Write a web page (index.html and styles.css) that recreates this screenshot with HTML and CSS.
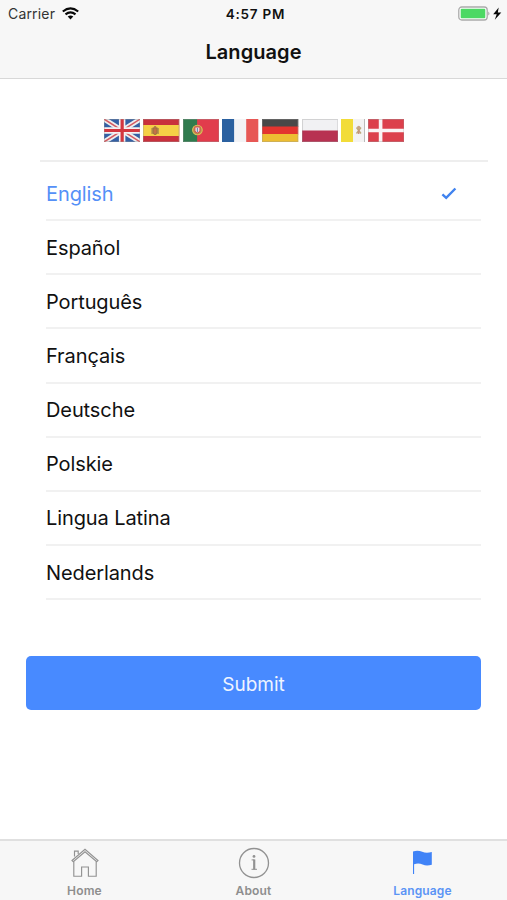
FILE: index.html
```html
<!DOCTYPE html>
<html lang="en">
<head>
<meta charset="utf-8">
<meta name="viewport" content="width=device-width, initial-scale=1">
<title>Language</title>
<link rel="stylesheet" href="styles.css">
</head>
<body>
<header class="header">
  <div class="status">
    <div class="status-left"><span class="carrier">Carrier</span>
      <svg width="17" height="13" viewBox="0 0 17 13" fill="none" stroke="#080808" stroke-width="2.1"><path d="M.8 4.5Q8.5-1.8 16.2 4.5M3.5 7.4Q8.5 3.2 13.5 7.4"/><path d="M5.7 9.6Q8.5 7.4 11.3 9.6L8.5 12.6Z" fill="#080808" stroke="none"/></svg>
    </div>
    <span class="time">4:57 PM</span>
    <div class="status-right">
      <svg width="44" height="16" viewBox="0 0 44 16"><rect x=".8" y="1" width="28.4" height="13" rx="3" fill="#fff" stroke="#aaa" stroke-width="1.3"/><rect x="2.7" y="2.8" width="24.6" height="9.4" rx="1" fill="#4cd964"/><path d="M30.4 5.4q2 2.1 0 4.2z" fill="#999"/><path d="M40.7 1.4L35.2 8.3H38.7L36.8 13.8 43.3 6.6H39.8Z" fill="#080808"/></svg>
    </div>
  </div>
  <h1 class="title">Language</h1>
</header>
<main class="content">
  <div class="flags">
    <svg class="flag" viewBox="0 0 36 23" preserveAspectRatio="none"><path fill="#3460a4" d="M0 0h36v23H0z"/><path d="M0 0L36 23M36 0L0 23" stroke="#eee" stroke-width="5"/><path d="M0 0L36 23M36 0L0 23" stroke="#d55a61" stroke-width="1.5"/><path d="M18 0V23M0 11.5H36" stroke="#f4f1f2" stroke-width="6.4"/><path d="M18 0V23M0 11.5H36" stroke="#d3363f" stroke-width="3.2"/><path class="rim" d="M.5.5h35v22H.5z"/></svg>
    <svg class="flag" viewBox="0 0 36 23" preserveAspectRatio="none"><path fill="#c9303c" d="M0 0h36v23H0z"/><path fill="#f5cf46" d="M0 6h36v11H0z"/><path d="M9 9v6M15 9v6" stroke="#a9864c" stroke-width="1.3"/><path d="M10 9h4v5q-2 3-4 0z" fill="#c37046" stroke="#96713f"/><circle cx="12" cy="8.3" r="1.3" fill="#ad7847"/><path class="rim" d="M.5.5h35v22H.5z"/></svg>
    <svg class="flag" viewBox="0 0 36 23" preserveAspectRatio="none"><path fill="#e13c4c" d="M0 0h36v23H0z"/><path fill="#2f7b4e" d="M0 0h14v23H0z"/><circle cx="14.3" cy="11" r="4.8" fill="#b5964c" stroke="#dfbe58"/><path d="M11.8 8h5v4q-2.5 4-5 0z" fill="#ecdfdf" stroke="#d44d50"/><path d="M14.3 9v4" stroke="#6680ac"/><path class="rim" d="M.5.5h35v22H.5z"/></svg>
    <svg class="flag flag-france" viewBox="0 0 36 23" preserveAspectRatio="none"><path fill="#f3f3f5" d="M0 0h36v23H0z"/><path fill="#2b61a0" d="M0 0h12v23H0z"/><path fill="#e75855" d="M24 0h12v23H24z"/></svg>
    <svg class="flag" viewBox="0 0 36 23" preserveAspectRatio="none"><path fill="#484848" d="M0 0h36v8H0z"/><path fill="#e3342f" d="M0 7.5h36v8H0z"/><path fill="#edbd32" d="M0 15h36v8H0z"/><path class="rim" d="M.5.5h35v22H.5z"/></svg>
    <svg class="flag" viewBox="0 0 36 23" preserveAspectRatio="none"><path fill="#f1f1f3" d="M0 0h36v12H0z"/><path fill="#b83252" d="M0 11.5h36V23H0z"/><path class="rim" d="M.5.5h35v22H.5z"/></svg>
    <svg class="flag flag-vatican" viewBox="0 0 24 23" preserveAspectRatio="none"><path fill="#f3f3f3" d="M0 0h24v23H0z"/><path fill="#f2dc38" d="M0 0h12v23H0z"/><path d="M15.5 8.5l4.5 6M20 8.5l-4.5 6" stroke="#bda879" stroke-width="1.4"/><circle cx="17.7" cy="8.5" r="1.7" fill="#c7a58a"/><path d="M17.7 11v4" stroke="#c6927d" stroke-width="1.5"/><path d="M23.5 0V23" stroke="#bbb"/></svg>
    <svg class="flag" viewBox="0 0 36 23" preserveAspectRatio="none"><path fill="#dc404c" d="M0 0h36v23H0z"/><path d="M12.5 0V23M0 11.5H36" stroke="#faf3f4" stroke-width="3.6"/><path class="rim" d="M.5.5h35v22H.5z"/></svg>
  </div>
  <ul class="list">
    <li class="row selected"><span>English</span><svg width="16" height="13" viewBox="0 0 16 13" fill="none" stroke="#4083ef" stroke-width="2.4"><path d="M1.4 7.3L5.2 10.8 14.4 1.5"/></svg></li>
    <li class="row"><span>Español</span></li>
    <li class="row"><span>Português</span></li>
    <li class="row"><span>Français</span></li>
    <li class="row"><span>Deutsche</span></li>
    <li class="row"><span>Polskie</span></li>
    <li class="row"><span>Lingua Latina</span></li>
    <li class="row"><span>Nederlands</span></li>
  </ul>
  <button class="submit" type="button">Submit</button>
</main>
<nav class="tabs">
  <a class="tab"><svg width="30" height="32" viewBox="0 0 30 32" fill="none" stroke="#929292" stroke-width="1.15"><path d="M2 13.5L15 2.2 28 13.5 26.7 14.8 15 4.8 3.3 14.8Z"/><path d="M4.5 9.5V4.1H8.2V7"/><path d="M3.8 14.6V29.2H11.6V20H18.4V29.2H26.2V14.6"/></svg><span>Home</span></a>
  <a class="tab"><svg width="32" height="32" viewBox="0 0 32 32" fill="none" stroke="#929292"><circle cx="16" cy="16" r="14.5" stroke-width="1.3"/><path d="M16.2 12.5V22.5" stroke-width="2.2"/><path d="M13.6 12.9H16.4M13.5 22.3H19" stroke-width="1"/><circle cx="16" cy="9.4" r="1.4" fill="#929292" stroke="none"/></svg><span>About</span></a>
  <a class="tab active"><svg width="24" height="32" viewBox="0 0 24 32"><path d="M2 4.4Q7 3 11.2 4.8T20.8 5V17.7Q15.6 19.3 11.6 17.5T3.1 17.2V27H2Z" fill="#4083f7"/></svg><span>Language</span></a>
</nav>
</body>
</html>
```
FILE: styles.css
```css
* { box-sizing: border-box; }
body {
  margin: 0;
  height: 900px;
  display: flex;
  flex-direction: column;
  background: #fff;
  color: #111;
  font-family: Inter, "Liberation Sans", sans-serif;
}
.header { height: 79px; background: #f7f7f7; border-bottom: 1px solid #d8d8d8; }
.status {
  display: grid;
  grid-template-columns: 1fr auto 1fr;
  align-items: center;
  height: 27px;
  padding: 0 5px 0 8px;
  font-size: 14px;
}
.status-left { display: flex; align-items: center; gap: 7px; }
.carrier { color: #333; letter-spacing: .17px; }
.time { font-weight: 600; font-size: 13.5px; padding-left: 1px; letter-spacing: .75px; }
.status-right { display: flex; justify-content: flex-end; }
.title { margin: 0; padding-top: 1px; line-height: 49px; font-size: 20px; font-weight: 600; text-align: center; letter-spacing: .08px; }
.content { flex: 1; display: flex; flex-direction: column; padding: 0 26px; }
.flags {
  display: flex;
  gap: 3px;
  height: 83px;
  margin: 0 -7px 0 14px;
  padding: 40px 0 0 64px;
  border-bottom: 2px solid #eee;
}
.flag { width: 36.3px; height: 23px; flex: none; }
.flag-france { margin: 0 .6px; }
.flag-vatican { width: 24px; }
.rim { fill: none; stroke: #999; stroke-opacity: .35; }
.list { margin: 0 0 0 20px; padding: 5px 0 0; list-style: none; }
.row {
  display: flex;
  align-items: center;
  justify-content: space-between;
  height: 54.15px;
  padding: 1px 24px 0 0;
  border-bottom: 2px solid #f1f1f1;
  font-size: 20px;
  letter-spacing: -.1px;
}
.selected { color: #5590f7; }
.submit {
  height: 54px;
  margin: 56px 0 0;
  padding: 2px 0 0;
  border: 0;
  border-radius: 5px;
  background: #488aff;
  color: #eef4ff;
  font: 400 19px Inter, "Liberation Sans", sans-serif;
}
.tabs { display: flex; height: 61px; background: #f7f7f7; border-top: 2px solid #e0e0e0; }
.tab { flex: 1; display: flex; flex-direction: column; align-items: center; padding-top: 6px; color: #8e8e8e; }
.tab span { font-size: 12px; font-weight: 600; line-height: 15px; margin-top: 4px; letter-spacing: .15px; }
.tab svg { display: block; }
.active { color: #5b94f5; }
```
